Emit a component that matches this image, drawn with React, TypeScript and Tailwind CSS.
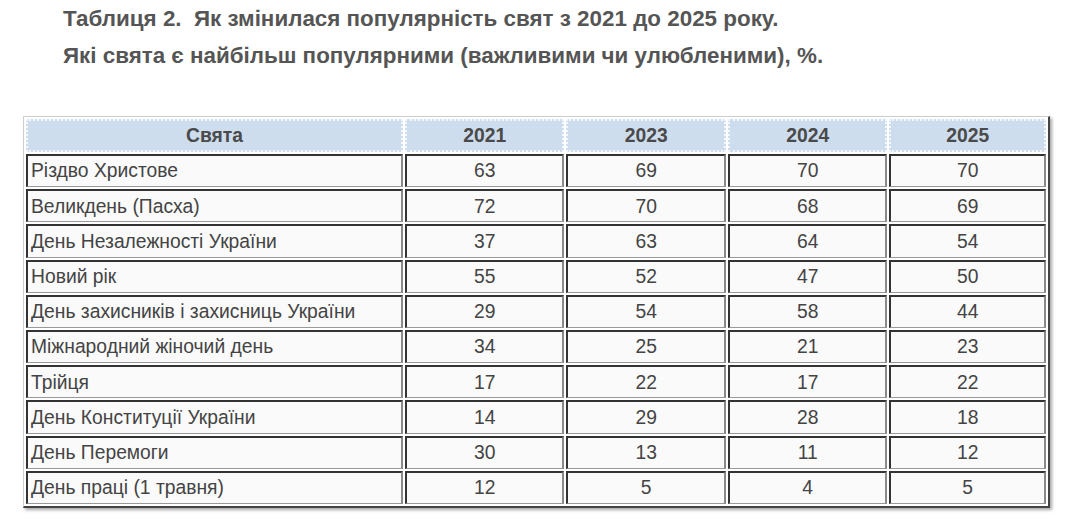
import React from "react";

const rows: [string, string, string, string, string][] = [
  ["Різдво Христове", "63", "69", "70", "70"],
  ["Великдень (Пасха)", "72", "70", "68", "69"],
  ["День Незалежності України", "37", "63", "64", "54"],
  ["Новий рік", "55", "52", "47", "50"],
  ["День захисників і захисниць України", "29", "54", "58", "44"],
  ["Міжнародний жіночий день", "34", "25", "21", "23"],
  ["Трійця", "17", "22", "17", "22"],
  ["День Конституції України", "14", "29", "28", "18"],
  ["День Перемоги", "30", "13", "11", "12"],
  ["День праці (1 травня)", "12", "5", "4", "5"],
];

const headers = ["Свята", "2021", "2023", "2024", "2025"];

export default function App() {
  return (
    <div className="w-[1075px] h-[528px] bg-white overflow-hidden" style={{ fontFamily: '"Liberation Sans", Arial, sans-serif' }}>
      <div className="pl-[63px] pt-0 text-[22.4px] font-bold text-[#555555] leading-[37px]">
        <div className="whitespace-pre">Таблиця 2.  Як змінилася популярність свят з 2021 до 2025 року.</div>
        <div>Які свята є найбільш популярними (важливими чи улюбленими), %.</div>
      </div>
      <div className="ml-[23px] mt-[42px] w-[1027px] border border-t-[#cfcfcf] border-l-[#cfcfcf] border-r-[#444] border-b-[#444] border-r-2 border-b-2 shadow-[2px_2px_3px_rgba(0,0,0,0.35)] bg-white">
        <table className="w-full border-separate border-spacing-[2px] text-[19.3px] text-[#444]">
          <colgroup>
            <col className="w-[378px]" />
            <col className="w-[160px]" />
            <col className="w-[160px]" />
            <col className="w-[160px]" />
            <col className="w-[157px]" />
          </colgroup>
          <thead>
            <tr>
              {headers.map((h) => (
                <th key={h} className="h-[33px] bg-[#cedded] border-2 border-dotted border-[#f4f7fb] font-bold text-[19.3px] text-[#4a4a4a] text-center p-0 leading-none">
                  {h}
                </th>
              ))}
            </tr>
          </thead>
          <tbody>
            {rows.map((r) => (
              <tr key={r[0]}>
                {r.map((c, i) => (
                  <td
                    key={i}
                    className={`h-[33.2px] p-0 bg-[#fafafa] border-t-2 border-l-2 border-r-2 border-b border-t-[#333] border-l-[#333] border-r-[#8a8a8a] border-b-[#999] border-b-dotted leading-none ${i === 0 ? "text-left pl-[3px]" : "text-center"}`}
                  >
                    {c}
                  </td>
                ))}
              </tr>
            ))}
          </tbody>
        </table>
      </div>
    </div>
  );
}
